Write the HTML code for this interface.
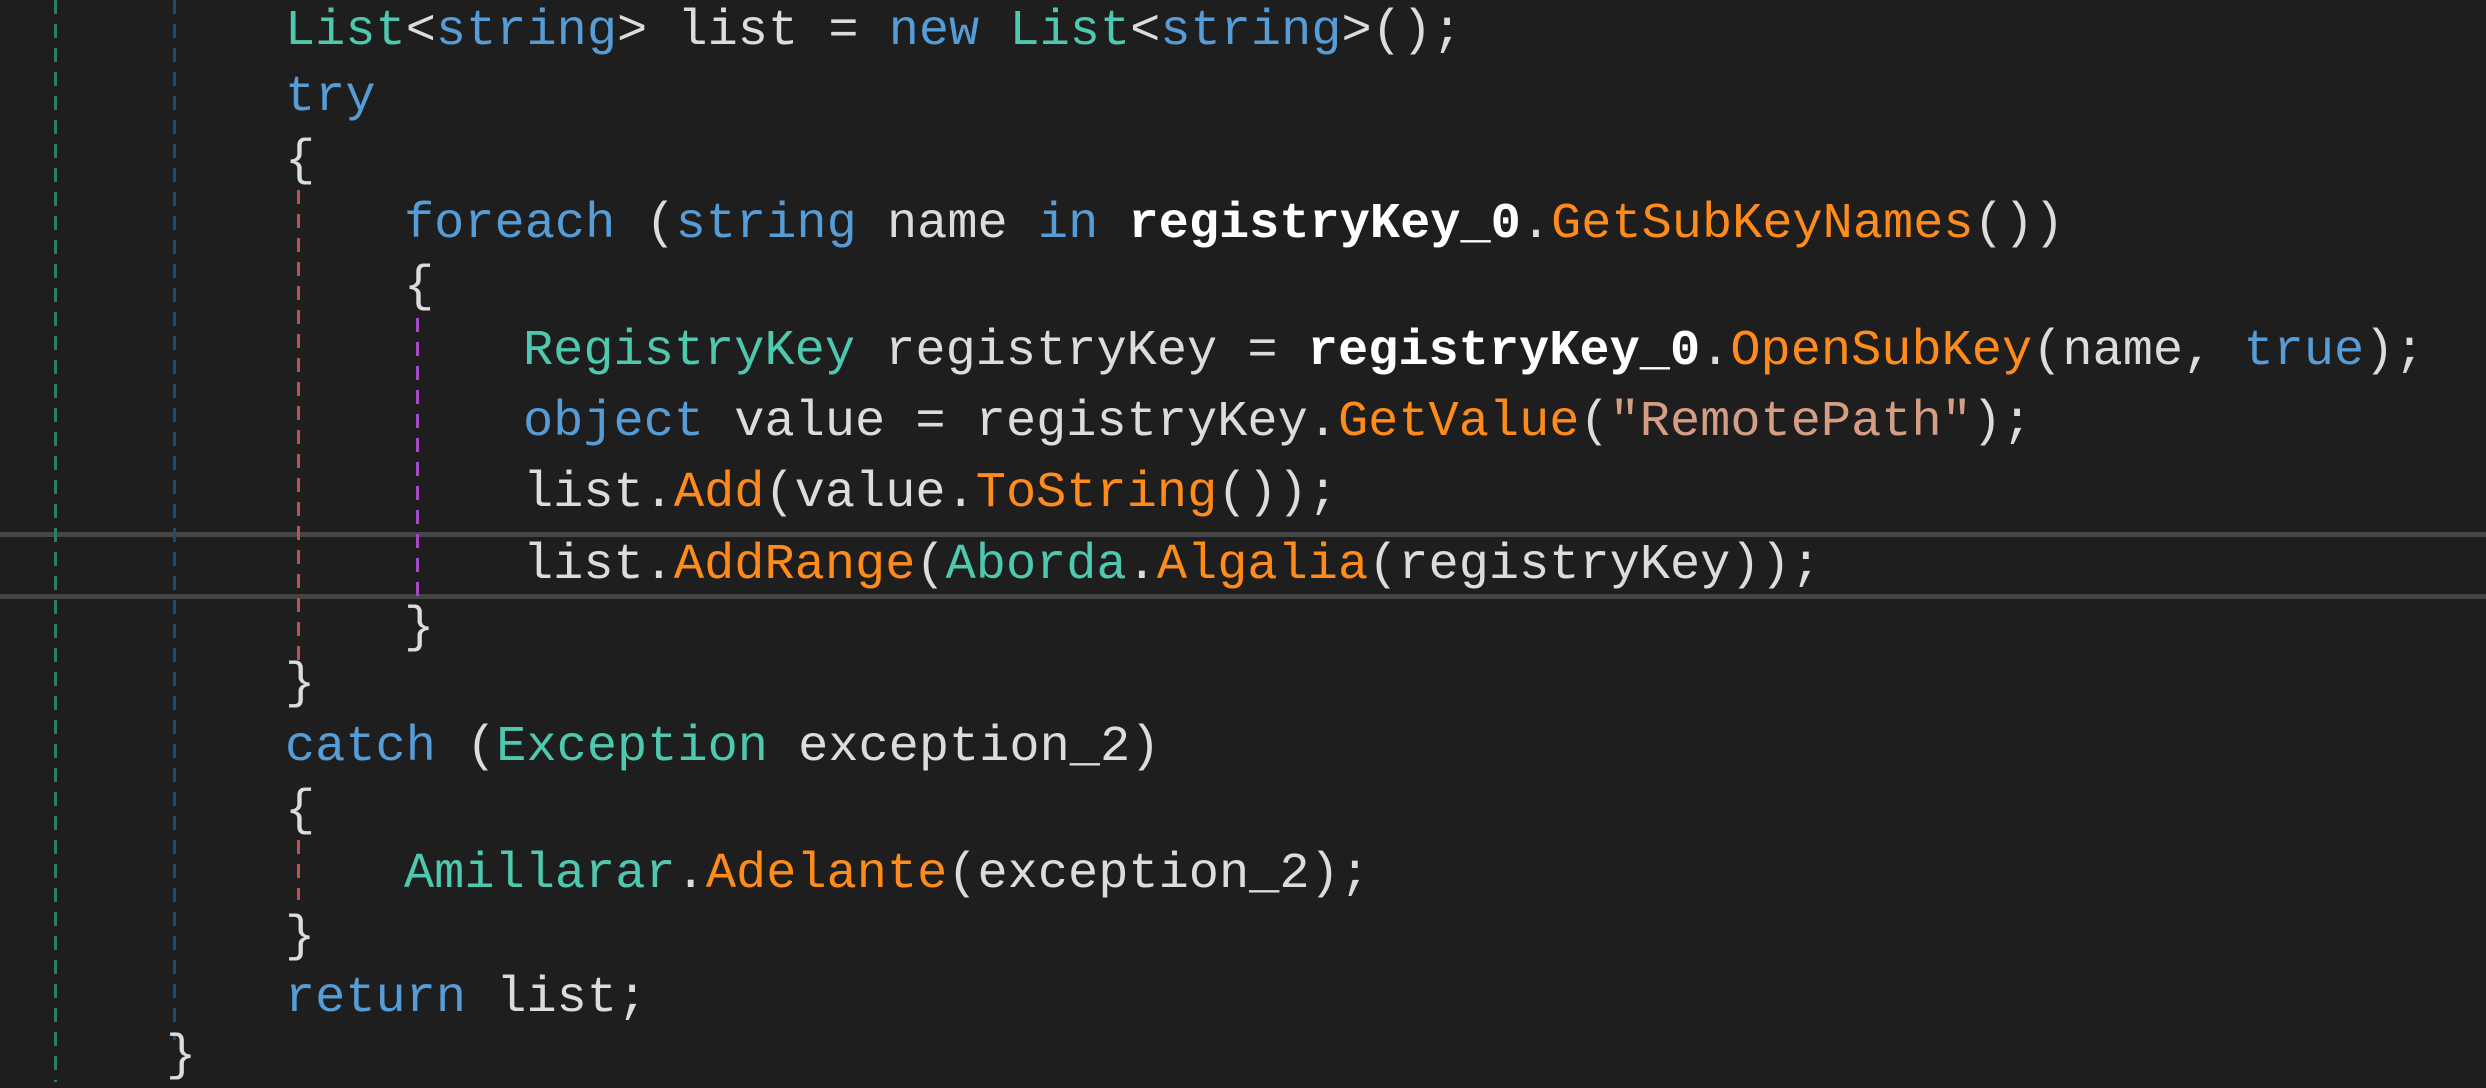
<!DOCTYPE html>
<html><head><meta charset="utf-8"><style>
html,body{margin:0;padding:0;background:#1e1e1e;width:2486px;height:1082px;overflow:hidden}
.l{position:absolute;height:63px;line-height:63px;font-family:"Liberation Mono",monospace;font-size:50.3px;color:#dcdcdc;white-space:pre}
.k{color:#569cd6}.t{color:#4ec9b0}.m{color:#ff8c1a}.s{color:#d69d85}.b{font-weight:bold;color:#fff}
.g{position:absolute;width:3px;background:repeating-linear-gradient(to bottom,var(--c) 0 14px,transparent 14px 24px)}
.hl{position:absolute;left:0;width:2486px;height:5px;background:#464646}
</style></head><body>
<div class="hl" style="top:532px"></div>
<div class="hl" style="top:594px"></div>
<div class="g" style="left:54px;top:0;height:1082px;--c:#2e7d5b"></div>
<div class="g" style="left:173px;top:0;height:1040px;--c:#1f4a70"></div>
<div class="g" style="left:297px;top:190px;height:470px;--c:#c0504d"></div>
<div class="g" style="left:297px;top:840px;height:60px;--c:#c0504d"></div>
<div class="g" style="left:416px;top:318px;height:290px;--c:#a349c8"></div>
<div class="l" style="left:285px;top:0px"><span class="t">List</span>&lt;<span class="k">string</span>&gt; list = <span class="k">new</span> <span class="t">List</span>&lt;<span class="k">string</span>&gt;();</div>
<div class="l" style="left:285px;top:66px"><span class="k">try</span></div>
<div class="l" style="left:285px;top:130px">{</div>
<div class="l" style="left:404px;top:193px"><span class="k">foreach</span> (<span class="k">string</span> name <span class="k">in</span> <span class="b">registryKey_0</span>.<span class="m">GetSubKeyNames</span>())</div>
<div class="l" style="left:404px;top:256px">{</div>
<div class="l" style="left:523px;top:320px"><span class="t">RegistryKey</span> registryKey = <span class="b">registryKey_0</span>.<span class="m">OpenSubKey</span>(name, <span class="k">true</span>);</div>
<div class="l" style="left:523px;top:391px"><span class="k">object</span> value = registryKey.<span class="m">GetValue</span>(<span class="s">"RemotePath"</span>);</div>
<div class="l" style="left:523px;top:462px">list.<span class="m">Add</span>(value.<span class="m">ToString</span>());</div>
<div class="l" style="left:523px;top:534px">list.<span class="m">AddRange</span>(<span class="t">Aborda</span>.<span class="m">Algalia</span>(registryKey));</div>
<div class="l" style="left:404px;top:597px">}</div>
<div class="l" style="left:285px;top:653px">}</div>
<div class="l" style="left:285px;top:716px"><span class="k">catch</span> (<span class="t">Exception</span> exception_2)</div>
<div class="l" style="left:285px;top:780px">{</div>
<div class="l" style="left:404px;top:843px"><span class="t">Amillarar</span>.<span class="m">Adelante</span>(exception_2);</div>
<div class="l" style="left:285px;top:906px">}</div>
<div class="l" style="left:285px;top:967px"><span class="k">return</span> list;</div>
<div class="l" style="left:166px;top:1025px">}</div>
</body></html>
